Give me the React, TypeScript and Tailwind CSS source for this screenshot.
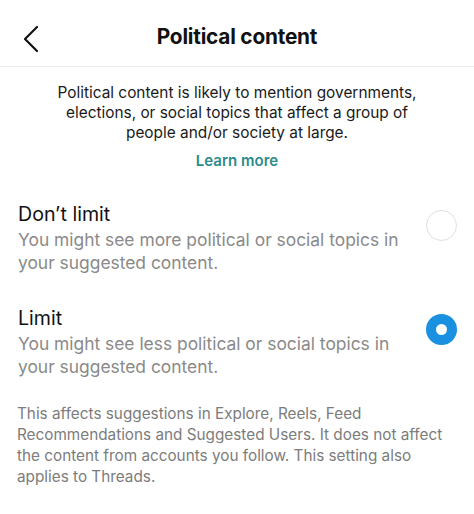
import React, { useState } from "react";

const OPTIONS = [
  { id: "none", title: "Don’t limit", desc: "You might see more political or social topics in your suggested content." },
  { id: "limit", title: "Limit", desc: "You might see less political or social topics in your suggested content." },
];

export default function App() {
  const [value, setValue] = useState("limit");

  return (
    <div className="w-[474px] h-[514px] bg-white text-[#111] overflow-hidden" style={{ fontFamily: "Inter, 'Liberation Sans', sans-serif" }}>
      {/* Header */}
      <div className="relative h-[67px] flex items-center justify-center border-b border-[#ececec]">
        <button className="absolute left-[20px] top-[24px] w-[22px] h-[30px] flex items-center justify-center">
          <svg width="16" height="28" viewBox="0 0 16 28" fill="none" stroke="#111" strokeWidth={2.2} strokeLinecap="round" strokeLinejoin="round">
            <path d="M14 2L2 14l12 12" />
          </svg>
        </button>
        <h1 className="text-[20.8px] font-bold tracking-[-0.2px] mt-[8px]">Political content</h1>
      </div>

      {/* Intro */}
      <div className="pt-[16px] flex flex-col items-center text-center">
        <p className="w-[366px] text-[15.4px] leading-[20px] text-[#1a1a1a]">
          Political content is likely to mention governments, elections, or social topics that affect a group of people and/or society at large.
        </p>
        <a className="inline-block mt-[7px] text-[15px] font-semibold text-[#2b8b8c]">Learn more</a>
      </div>

      {/* Options */}
      <div className="flex flex-col gap-[32px] mt-[29px]">
        {OPTIONS.map((o) => (
          <button key={o.id} onClick={() => setValue(o.id)} className="flex items-center text-left pl-[18px] pr-[17px]">
            <div className="flex-1 pr-[18px]">
              <div className="text-[19.6px] leading-[24px] text-[#111]">{o.title}</div>
              <div className="max-w-[384px] text-[17.4px] leading-[23px] text-[#8a8a8a] mt-[2px]">{o.desc}</div>
            </div>
            {value === o.id ? (
              <div className="w-[31px] h-[31px] rounded-full bg-[#1990e0] flex items-center justify-center shrink-0 mt-[-24px]">
                <div className="w-[11px] h-[11px] rounded-full bg-white" />
              </div>
            ) : (
              <div className="w-[31px] h-[31px] rounded-full border-[1.5px] border-[#e0e0e0] shrink-0 mt-[-24px]" />
            )}
          </button>
        ))}
      </div>

      {/* Footer note */}
      <p className="px-[17px] mt-[25px] text-[15.3px] leading-[21px] text-[#7c7c7c]">
        This affects suggestions in Explore, Reels, Feed Recommendations and Suggested Users. It does not affect the content from accounts you follow. This setting also applies to Threads.
      </p>
    </div>
  );
}
